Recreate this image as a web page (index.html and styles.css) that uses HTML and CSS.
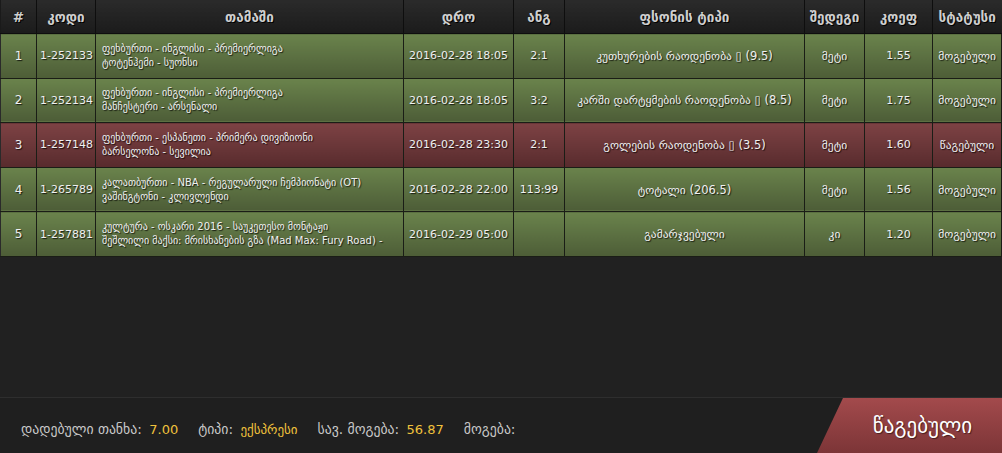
FILE: index.html
```html
<!DOCTYPE html>
<html lang="ka">
<head>
<meta charset="utf-8">
<link rel="stylesheet" href="styles.css">
</head>
<body>
<div class="page">
  <table class="bets">
    <colgroup>
      <col class="c-num"><col class="c-code"><col class="c-game"><col class="c-date"><col class="c-score"><col class="c-type"><col class="c-res"><col class="c-odd"><col class="c-stat">
    </colgroup>
    <thead>
      <tr>
        <th>#</th><th>კოდი</th><th>თამაში</th><th>დრო</th><th>ანგ</th><th>ფსონის ტიპი</th><th>შედეგი</th><th>კოეფ</th><th>სტატუსი</th>
      </tr>
    </thead>
    <tbody>
      <tr class="won">
        <td class="num">1</td><td class="code">1-252133</td>
        <td class="game"><span>ფეხბურთი - ინგლისი - პრემიერლიგა</span><span>ტოტენჰემი - სუონსი</span></td>
        <td class="date">2016-02-28 18:05</td><td class="score">2:1</td>
        <td class="geo">კუთხურების რაოდენობა ▯ (9.5)</td><td class="geo">მეტი</td><td class="odd">1.55</td><td class="geo">მოგებული</td>
      </tr>
      <tr class="won">
        <td class="num">2</td><td class="code">1-252134</td>
        <td class="game"><span>ფეხბურთი - ინგლისი - პრემიერლიგა</span><span>მანჩესტერი - არსენალი</span></td>
        <td class="date">2016-02-28 18:05</td><td class="score">3:2</td>
        <td class="geo">კარში დარტყმების რაოდენობა ▯ (8.5)</td><td class="geo">მეტი</td><td class="odd">1.75</td><td class="geo">მოგებული</td>
      </tr>
      <tr class="lost">
        <td class="num">3</td><td class="code">1-257148</td>
        <td class="game"><span>ფეხბურთი - ესპანეთი - პრიმერა დივიზიონი</span><span>ბარსელონა - სევილია</span></td>
        <td class="date">2016-02-28 23:30</td><td class="score">2:1</td>
        <td class="geo">გოლების რაოდენობა ▯ (3.5)</td><td class="geo">მეტი</td><td class="odd">1.60</td><td class="geo">წაგებული</td>
      </tr>
      <tr class="won">
        <td class="num">4</td><td class="code">1-265789</td>
        <td class="game"><span>კალათბურთი - NBA - რეგულარული ჩემპიონატი (OT)</span><span>ვაშინგტონი - კლივლენდი</span></td>
        <td class="date">2016-02-28 22:00</td><td class="score">113:99</td>
        <td class="geo">ტოტალი (206.5)</td><td class="geo">მეტი</td><td class="odd">1.56</td><td class="geo">მოგებული</td>
      </tr>
      <tr class="won">
        <td class="num">5</td><td class="code">1-257881</td>
        <td class="game"><span>კულტურა - ოსკარი 2016 - საუკეთესო მონტაჟი</span><span>შეშლილი მაქსი: მრისხანების გზა (Mad Max: Fury Road) -</span></td>
        <td class="date">2016-02-29 05:00</td><td class="score"></td>
        <td class="geo">გამარჯვებული</td><td class="geo">კი</td><td class="odd">1.20</td><td class="geo">მოგებული</td>
      </tr>
    </tbody>
  </table>
  <div class="spacer"></div>
  <div class="footer">
    <div class="summary">
      <span class="item">დადებული თანხა: <b>7.00</b></span>
      <span class="item">ტიპი: <b>ექსპრესი</b></span>
      <span class="item">სავ. მოგება: <b>56.87</b></span>
      <span class="item">მოგება:</span>
    </div>
    <div class="status-btn">წაგებული</div>
  </div>
</div>
</body>
</html>
```

FILE: styles.css
```css
html, body {
  margin: 0;
  padding: 0;
  background: #212121;
}
body {
  font-family: "DejaVu Sans", sans-serif;
  color: #e6e6e6;
}
.page {
  width: 1002px;
  height: 453px;
  display: flex;
  flex-direction: column;
  overflow: hidden;
}
.bets {
  width: 1001px;
  border-collapse: collapse;
  table-layout: fixed;
}
.c-num { width: 36px; }
.c-code { width: 59px; }
.c-game { width: 308px; }
.c-date { width: 110px; }
.c-score { width: 51px; }
.c-type { width: 240px; }
.c-res { width: 60px; }
.c-odd { width: 68px; }
.c-stat { width: 69px; }

.bets th {
  height: 33px;
  padding: 0;
  background: linear-gradient(#2b2b2b, #1b1b1b);
  border-left: 1px solid #0e0e0e;
  border-bottom: 1px solid #0e0e0e;
  color: #cfcfcf;
  font-size: 13.5px;
  font-weight: bold;
  text-align: center;
  text-shadow: 1px 1px 0 #000;
}
.bets th:first-child { border-left-color: #1a1a1a; }

.bets td {
  height: 43.6px;
  padding: 0;
  border: 1px solid #1a1d16;
  border-top: 0;
  font-size: 11px;
  text-align: center;
  color: #f0f0f0;
  text-shadow: 1px 1px 1px rgba(0,0,0,0.75);
  white-space: nowrap;
  overflow: hidden;
}
.bets td:first-child { border-left-color: #2a2a2a; }
.won td {
  background: linear-gradient(#6a834c, #4d5d37);
}
.lost td {
  background: linear-gradient(#7d4244, #582b2d);
}
.bets td.code {
  text-align: left;
  padding-left: 3px;
}
.bets td.num { font-size: 12px; }
.bets td.date, .bets td.score, .bets td.odd { font-size: 11px; }
.bets td.geo { font-size: 11.5px; }
.bets td.game {
  text-align: left;
  padding-left: 6px;
  font-size: 10px;
  line-height: 14px;
}
.game span { display: block; }

.spacer { flex: 1; }

.footer {
  height: 55px;
  border-top: 1px solid #2e2e2e;
  background: #1f1f1f;
  display: flex;
  align-items: stretch;
  justify-content: space-between;
}
.summary {
  display: flex;
  align-items: center;
  gap: 20px;
  padding: 6px 0 0 21px;
  font-size: 13.75px;
  color: #c9c9c9;
}
.summary b {
  color: #f0c23c;
  font-weight: normal;
  font-size: 13px;
  margin-left: 3px;
}
.status-btn {
  width: 159px;
  padding-left: 26px;
  display: flex;
  align-items: center;
  justify-content: center;
  background: linear-gradient(#a34a4c, #7c3537);
  clip-path: polygon(26px 0, 100% 0, 100% 100%, 0 100%);
  color: #ffffff;
  font-size: 21px;
  text-shadow: 1px 1px 1px rgba(0,0,0,0.5);
}
```
